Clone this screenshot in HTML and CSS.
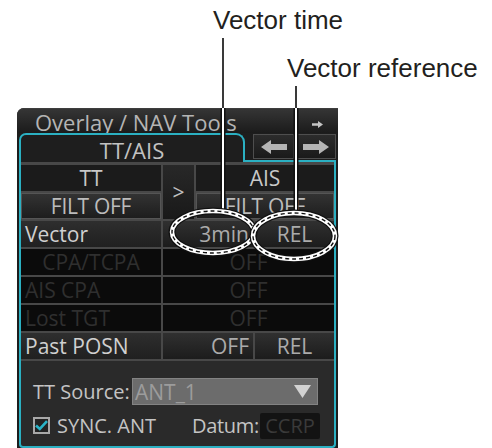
FILE: index.html
```html
<!DOCTYPE html>
<html lang="en">
<head>
    <meta charset="UTF-8">
    <title>TT/AIS Vector</title>
    <link rel="stylesheet" href="styles.css">
</head>
<body>
<div class="sheet">

    <!-- Callout labels -->
    <div class="notes">
        <div class="note note-time">Vector time</div>
        <div class="note note-ref">Vector reference</div>
    </div>

    <div class="panel">
        <div class="panel-head">
            <span class="panel-title">Overlay / NAV Tools</span>
            <svg class="head-arrow" width="11" height="7" viewBox="0 0 11 7"><path d="M0 2.3H6V0L11 3.5L6 7V4.7H0Z" fill="#c4c4c4"/></svg>
        </div>

        <div class="tab-bar">
            <div class="tab">TT/AIS</div>
            <div class="tab-rest">
                <div class="nav-btn">
                    <svg width="26" height="14" viewBox="0 0 26 14"><path d="M0 7L10 0V4H26V10H10V14Z" fill="#b4b4b4"/></svg>
                </div>
                <div class="nav-btn">
                    <svg width="26" height="14" viewBox="0 0 26 14"><path d="M26 7L16 0V4H0V10H16V14Z" fill="#b4b4b4"/></svg>
                </div>
            </div>
        </div>

        <div class="tab-body">
            <div class="rows">
                <div class="filters">
                    <div class="cell head">TT</div>
                    <div class="cell swap">&gt;</div>
                    <div class="cell head">AIS</div>
                    <div class="cell btn">FILT OFF</div>
                    <div class="cell btn">FILT OFF</div>
                </div>

                <div class="row">
                    <div class="label">Vector</div>
                    <div class="val right">3min</div>
                    <div class="val">REL</div>
                </div>
                <div class="row off">
                    <div class="label center">CPA/TCPA</div>
                    <div class="val wide">OFF</div>
                </div>
                <div class="row off">
                    <div class="label">AIS CPA</div>
                    <div class="val wide">OFF</div>
                </div>
                <div class="row off">
                    <div class="label">Lost TGT</div>
                    <div class="val wide">OFF</div>
                </div>
                <div class="row">
                    <div class="label">Past POSN</div>
                    <div class="val right">OFF</div>
                    <div class="val">REL</div>
                </div>
            </div>

            <div class="source">
                <div class="source-line">
                    <span class="source-label">TT Source:</span>
                    <div class="select">
                        <span>ANT_1</span>
                        <svg width="17" height="13" viewBox="0 0 17 13"><path d="M0 0H17L8.5 13Z" fill="#d2d2d2"/></svg>
                    </div>
                </div>
                <div class="source-line">
                    <span class="check">
                        <svg width="13" height="11" viewBox="0 0 13 11"><path d="M1 5.5L4.8 9L12 1.2" fill="none" stroke="#2ab4c8" stroke-width="2.6"/></svg>
                    </span>
                    <span class="sync">SYNC. ANT</span>
                    <span class="datum">Datum:</span>
                    <span class="datum-box">CCRP</span>
                </div>
            </div>
        </div>
    </div>

    <!-- Callout lines and rings drawn over the panel -->
    <svg class="callouts" width="492" height="448" viewBox="0 0 492 448">
        <g fill="none">
            <path d="M223 38V108M296 86V108" stroke="#3a3a3a" stroke-width="2"/>
            <path d="M223 108V211M296 108V213" stroke="#111" stroke-width="5"/>
            <path d="M223 108V211M296 108V213" stroke="#fff" stroke-width="2"/>

            <ellipse cx="213" cy="232" rx="41" ry="21" stroke="#111" stroke-width="7"/>
            <ellipse cx="213" cy="232" rx="41" ry="21" stroke="#fff" stroke-width="4.5"/>
            <ellipse cx="213" cy="232" rx="41" ry="21" stroke="#111" stroke-width="1.4" stroke-dasharray="4 3"/>

            <ellipse cx="294" cy="236" rx="41" ry="23" stroke="#111" stroke-width="7"/>
            <ellipse cx="294" cy="236" rx="41" ry="23" stroke="#fff" stroke-width="4.5"/>
            <ellipse cx="294" cy="236" rx="41" ry="23" stroke="#111" stroke-width="1.4" stroke-dasharray="4 3"/>
        </g>
    </svg>
</div>
</body>
</html>
```

FILE: styles.css
```css
/* Page */
body {
    margin: 0;
    background: #fff;
}

.sheet {
    position: relative;
    width: 492px;
    height: 448px;
    overflow: hidden;
}

/* Callout labels */
.notes {
    height: 108px;
    font-family: 'Liberation Sans', Arial, sans-serif;
    font-size: 26px;
    line-height: 28px;
    color: #231f20;
}

.note-time {
    padding-top: 6px;
    margin-left: 213px;
}

.note-ref {
    margin-top: 20px;
    margin-left: 287px;
}

.callouts {
    position: absolute;
    left: 0;
    top: 0;
    pointer-events: none;
}

/* Panel */
.panel {
    margin-left: 17px;
    width: 321px;
    height: 340px;
    padding: 0 2px;
    box-sizing: border-box;
    background: #1d1d1d;
    border-radius: 7px 0 0 0;
    font-family: 'Open Sans', sans-serif;
    color: #c6c6c6;
}

.panel-head {
    height: 25px;
    display: flex;
    justify-content: space-between;
    align-items: flex-end;
    margin: 0 -2px;
    padding: 0 15px 1px 18px;
    background: linear-gradient(#353535, #1b1b1b);
    border-radius: 7px 0 0 0;
    border-top: 1px solid #3e3e3e;
    box-sizing: border-box;
}

.panel-title {
    font-size: 22px;
    line-height: 20px;
    color: #b4b4b4;
}

.head-arrow {
    margin-bottom: 4px;
}

/* Tab row */
.tab-bar {
    display: flex;
    height: 29px;
}

.tab {
    width: 226px;
    box-sizing: border-box;
    padding-top: 4px;
    border: 2px solid #2bb0c2;
    border-bottom: none;
    border-radius: 7px 9px 0 0;
    background: #1e1e1e;
    text-align: center;
    font-size: 22px;
    line-height: 22px;
    color: #c2c2c2;
}

.tab-rest {
    flex: 1;
    display: flex;
    gap: 1px;
    padding: 1px 0 1px 8px;
    border-bottom: 2px solid #2bb0c2;
}

.nav-btn {
    flex: 1;
    display: flex;
    align-items: center;
    justify-content: center;
    background: linear-gradient(#2c2c2c, #1a1a1a);
    border: 1px solid #4e4e4e;
}

/* Tab body */
.tab-body {
    height: 286px;
    box-sizing: border-box;
    border: 2px solid #2bb0c2;
    border-top: none;
    border-radius: 0 0 4px 4px;
    background: #2a2a2a;
}

.rows {
    display: flex;
    flex-direction: column;
    gap: 2px;
    padding: 3px 0 2px;
    background: #484848;
    font-size: 21px;
}

.filters {
    display: grid;
    grid-template-columns: 140px 31px 1fr;
    grid-template-rows: 26px 26px;
    gap: 2px;
}

.cell {
    text-align: center;
    line-height: 26px;
    box-sizing: border-box;
}

.head {
    background: #1b1b1b;
    color: #c8c8c8;
}

.swap {
    grid-column: 2;
    grid-row: 1 / span 2;
    display: flex;
    align-items: center;
    justify-content: center;
    background: linear-gradient(#282828, #191919);
    color: #c0c0c0;
}

.btn {
    background: linear-gradient(#333, #1d1d1d);
    border: 1px solid #555;
    line-height: 24px;
    color: #bcbcbc;
    letter-spacing: -0.3px;
}

.row {
    display: grid;
    grid-template-columns: 140px 90px 1fr;
    gap: 2px;
    height: 26px;
    line-height: 26px;
}

.label {
    padding-left: 4px;
    background: linear-gradient(#2e2e2e, #202020);
    color: #d0d0d0;
    white-space: nowrap;
}

.label.center {
    padding-left: 0;
    text-align: center;
}

.val {
    text-align: center;
    background: linear-gradient(#303030, #1c1c1c);
    color: #ababab;
}

.val.right {
    text-align: right;
    padding-right: 4px;
}

.val.wide {
    grid-column: span 2;
}

.row.off .label,
.row.off .val {
    background: #0b0b0b;
    color: #2f2f2f;
}

/* TT source area */
.source {
    display: flex;
    flex-direction: column;
    gap: 7px;
    padding: 17px 0 0 12px;
    font-size: 20px;
    color: #c4c4c4;
}

.source-line {
    display: flex;
    align-items: center;
    height: 27px;
}

.source-label {
    width: 99px;
}

.select {
    width: 186px;
    height: 27px;
    box-sizing: border-box;
    display: flex;
    align-items: center;
    justify-content: space-between;
    padding: 0 6px 0 2px;
    background: #6c6c6c;
    border: 1px solid #838383;
    color: #9c9c9c;
    font-size: 21px;
}

.check {
    width: 17px;
    height: 17px;
    box-sizing: border-box;
    display: flex;
    align-items: center;
    justify-content: center;
    border: 2px solid #a8a8a8;
    background: #232323;
    margin-right: 7px;
}

.sync {
    width: 135px;
}

.datum {
    width: 68px;
    letter-spacing: -0.3px;
}

.datum-box {
    width: 60px;
    height: 26px;
    line-height: 26px;
    text-align: center;
    background: #131313;
    border-radius: 2px;
    color: #3a3a3a;
}
```
